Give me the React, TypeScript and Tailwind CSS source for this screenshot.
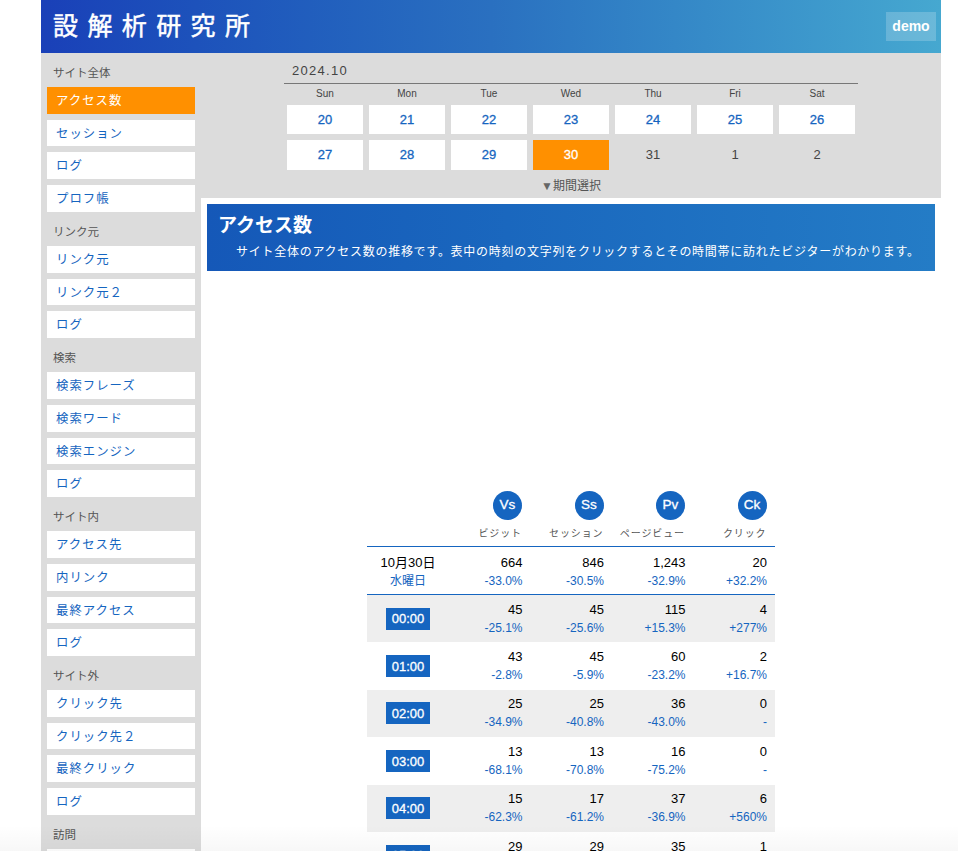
import React from "react";

const FONT = "font-['Liberation_Sans','Noto_Sans_CJK_JP',sans-serif]";

const nav = [
  { title: "サイト全体", items: ["アクセス数", "セッション", "ログ", "プロフ帳"] },
  { title: "リンク元", items: ["リンク元", "リンク元２", "ログ"] },
  { title: "検索", items: ["検索フレーズ", "検索ワード", "検索エンジン", "ログ"] },
  { title: "サイト内", items: ["アクセス先", "内リンク", "最終アクセス", "ログ"] },
  { title: "サイト外", items: ["クリック先", "クリック先２", "最終クリック", "ログ"] },
  { title: "訪問", items: ["訪問者"] },
];

const weekDays = ["Sun", "Mon", "Tue", "Wed", "Thu", "Fri", "Sat"];
const week1 = [20, 21, 22, 23, 24, 25, 26];
const week2 = [27, 28, 29, 30, 31, 1, 2];

const metrics = [
  { key: "Vs", label: "ビジット" },
  { key: "Ss", label: "セッション" },
  { key: "Pv", label: "ページビュー" },
  { key: "Ck", label: "クリック" },
];

const total = [
  ["664", "-33.0%"],
  ["846", "-30.5%"],
  ["1,243", "-32.9%"],
  ["20", "+32.2%"],
];

const rows = [
  { time: "00:00", cells: [["45", "-25.1%"], ["45", "-25.6%"], ["115", "+15.3%"], ["4", "+277%"]] },
  { time: "01:00", cells: [["43", "-2.8%"], ["45", "-5.9%"], ["60", "-23.2%"], ["2", "+16.7%"]] },
  { time: "02:00", cells: [["25", "-34.9%"], ["25", "-40.8%"], ["36", "-43.0%"], ["0", "-"]] },
  { time: "03:00", cells: [["13", "-68.1%"], ["13", "-70.8%"], ["16", "-75.2%"], ["0", "-"]] },
  { time: "04:00", cells: [["15", "-62.3%"], ["17", "-61.2%"], ["37", "-36.9%"], ["6", "+560%"]] },
  { time: "05:00", cells: [["29", "-32.6%"], ["29", "-34.1%"], ["35", "-40.7%"], ["1", "-"]] },
];

const Sidebar = () => (
  <aside className="w-[160px] shrink-0 bg-[#dcdcdc] px-[6px] pt-[5.67px]">
    {nav.map((group) => (
      <div key={group.title}>
        <div className="flex h-[28.33px] items-center pl-[6px] pt-[2px] text-[11.5px] text-[#555]">{group.title}</div>
        {group.items.map((item, i) => {
          const active = group.title === "サイト全体" && i === 0;
          return (
            <div
              key={item}
              className={`mb-[6px] flex h-[26.67px] items-center pl-[9px] pt-[2px] text-[12.4px] tracking-[1px] ${
                active ? "bg-[#ff9000] text-white" : "bg-white text-[#1565c0]"
              }`}
            >
              {item}
            </div>
          );
        })}
      </div>
    ))}
  </aside>
);

const Calendar = () => (
  <section className="h-[145px] bg-[#dcdcdc] pt-[10px]">
    <div className="mx-auto w-[574px]">
      <div className="h-[21px] border-b border-[#777] pl-[8px] text-[13px] leading-[15px] tracking-[1.3px] text-[#444]">2024.10</div>
      <div className="grid grid-cols-7 gap-x-[6px] px-[3px]">
        {weekDays.map((d) => (
          <div key={d} className="h-[21px] text-center text-[10px] leading-[19px] text-[#444]">{d}</div>
        ))}
        {week1.map((d) => (
          <div key={d} className="mb-[6px] flex h-[29px] items-center justify-center bg-white pt-px text-[13px] text-[#1565c0] [-webkit-text-stroke:0.3px_currentColor]">{d}</div>
        ))}
        {week2.map((d) => (
          <div
            key={d}
            className={`flex h-[30px] items-center justify-center text-[13px] ${
              d === 30
                ? "bg-[#ff9000] text-white [-webkit-text-stroke:0.3px_currentColor]"
                : d < 30 && d > 26
                  ? "bg-white text-[#1565c0] [-webkit-text-stroke:0.3px_currentColor]"
                  : "text-[#444]"
            }`}
          >
            {d}
          </div>
        ))}
      </div>
      <div className="mt-[8px] flex items-center justify-center text-[12px] leading-[16px] text-[#555]">
        <span className="text-[12px] text-[#666]">▼</span>
        <span>期間選択</span>
      </div>
    </div>
  </section>
);

const Banner = () => (
  <section className="mx-[6px] mt-[6px] h-[67px] bg-gradient-to-r from-[#1558b8] to-[#247cc6] pl-[11px] pt-[9px] text-white">
    <h2 className="text-[19px] font-bold leading-[26px]">アクセス数</h2>
    <p className="mt-[4px] pl-[18px] text-[12px] leading-[18px] tracking-[0.73px]">
      サイト全体のアクセス数の推移です。表中の時刻の文字列をクリックするとその時間帯に訪れたビジターがわかります。
    </p>
  </section>
);

const Cell = ({ value, pct }: { value: string; pct: string }) => (
  <div className="pr-[8px] text-right">
    <div className="text-[13px] leading-[19px] text-black">{value}</div>
    <div className="text-[12px] leading-[19px] text-[#1565c0]">{pct}</div>
  </div>
);

const GRID = "grid grid-cols-[82px_81.5px_81.5px_81.5px_81.5px]";

const StatsTable = () => (
  <section className="mx-auto mt-[220px] w-[408px]">
    <div className={`${GRID} h-[56px] border-b border-b-[#1565c0]`}>
      <div />
      {metrics.map((m) => (
        <div key={m.key} className="flex flex-col items-end pr-[8.5px]">
          <div className="flex h-[29px] w-[29px] items-center justify-center rounded-full bg-[#1565c0] text-[13.5px] text-white [-webkit-text-stroke:0.3px_currentColor]">{m.key}</div>
          <div className="mt-[6px] whitespace-nowrap text-[10px] leading-[15px] tracking-[0.9px] text-[#555]">{m.label}</div>
        </div>
      ))}
    </div>
    <div className={`${GRID} h-[48px] items-center border-b border-b-[#1565c0] pt-[2px]`}>
      <div className="text-center">
        <div className="text-[13px] leading-[19px] text-black">10月30日</div>
        <div className="text-[12px] leading-[19px] text-[#1565c0]">水曜日</div>
      </div>
      {total.map(([v, p]) => (
        <Cell key={v} value={v} pct={p} />
      ))}
    </div>
    {rows.map((row, i) => (
      <div key={row.time} className={`${GRID} h-[47.4px] items-center ${i % 2 === 0 ? "bg-[#eeeeee]" : "bg-white"}`}>
        <div className="flex justify-center">
          <div className="flex h-[22px] w-[44px] items-center justify-center bg-[#1565c0] pt-px text-[13px] text-white [-webkit-text-stroke:0.3px_currentColor]">{row.time}</div>
        </div>
        {row.cells.map(([v, p], j) => (
          <Cell key={j} value={v} pct={p} />
        ))}
      </div>
    ))}
  </section>
);

export default function App() {
  return (
    <div className={`relative h-[851px] overflow-hidden bg-white ${FONT}`}>
      <div className="ml-[41px] w-[900px]">
        <header className="flex h-[53px] items-center justify-between bg-gradient-to-r from-[#1a40b8] via-[#2a70c0] to-[#46a8d0] pl-[12px] pr-[5px]">
          <div className="text-[25px] leading-none tracking-[9.4px] text-white [-webkit-text-stroke:0.5px_currentColor]">設解析研究所</div>
          <div className="flex h-[29px] w-[50px] items-center justify-center bg-white/20 text-[14px] font-bold text-white">demo</div>
        </header>
        <div className="flex h-[798px]">
          <Sidebar />
          <main className="min-w-0 flex-1 bg-white">
            <Calendar />
            <Banner />
            <StatsTable />
          </main>
        </div>
      </div>
      <div className="pointer-events-none absolute inset-x-0 bottom-0 h-[26px] bg-gradient-to-b from-transparent to-black/[0.03]" />
    </div>
  );
}
